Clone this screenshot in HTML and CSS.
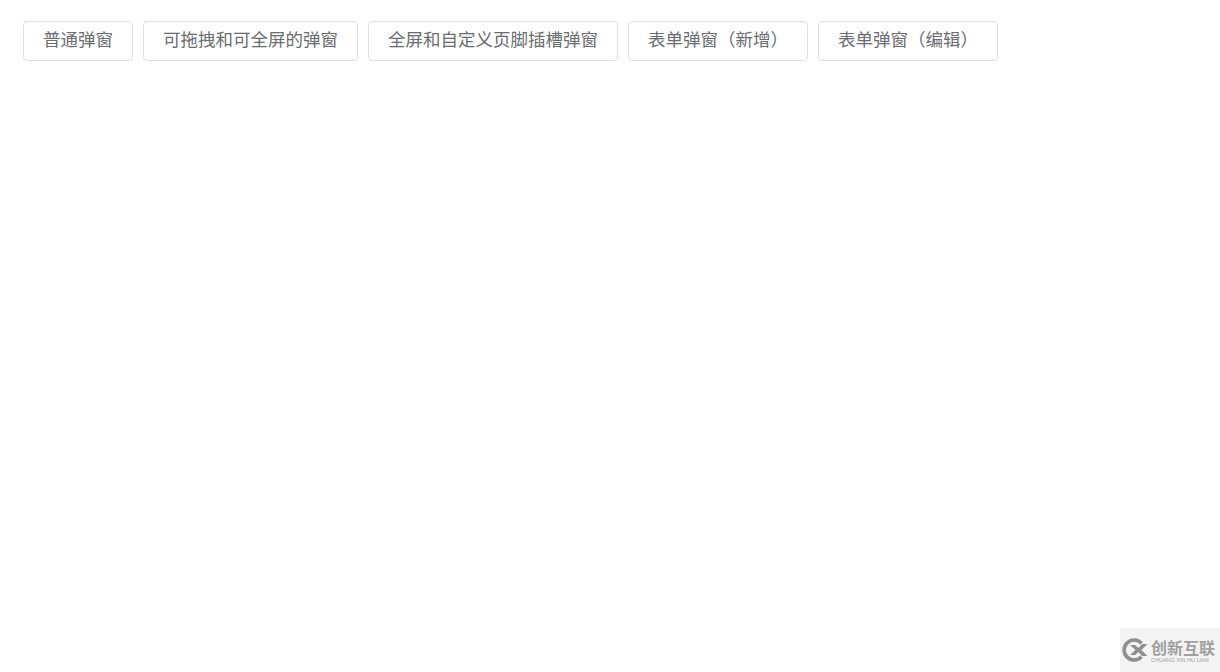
FILE: index.html
```html
<!DOCTYPE html>
<html lang="zh-CN">
<head>
    <meta charset="UTF-8">
    <title>弹窗</title>
    <link rel="stylesheet" href="styles.css">
</head>

<body>

    <div class="button-wrap">
        <button type="button" class="btn">普通弹窗</button>
        <button type="button" class="btn">可拖拽和可全屏的弹窗</button>
        <button type="button" class="btn">全屏和自定义页脚插槽弹窗</button>
        <button type="button" class="btn">表单弹窗（新增）</button>
        <button type="button" class="btn">表单弹窗（编辑）</button>
    </div>

    <!-- watermark in the corner -->
    <div class="watermark">
        <svg class="watermark-logo" width="26" height="26" viewBox="0 0 26 26">
            <path d="M19.5 6.2A10 10 0 1 0 19.5 19.8" fill="none" stroke="#8f8f8f" stroke-width="3.6"/>
            <path d="M8 8L13 8L16.5 11L20 7L25.5 7L19.5 13L25.5 19L20 19L16.5 15L13 18L8 18L13.5 13Z" fill="#8f8f8f"/>
        </svg>
        <div class="watermark-text">
            <span class="watermark-name">创新互联</span>
            <span class="watermark-pinyin">CHUANG XIN HU LIAN</span>
        </div>
    </div>

</body></html>
```

FILE: styles.css
```css
* {
    box-sizing: border-box;
}
html {
    background-color: #fff;
}
body {
    margin: 0;
    padding: 21px 23px;
    font-family: "Liberation Sans", "Noto Sans CJK SC", sans-serif;
}
.button-wrap {
    display: flex;
    gap: 10px;
}
.btn {
    height: 40px;
    padding: 0 19px 5px;
    border: 1px solid #dcdfe6;
    border-radius: 4px;
    background-color: #fff;
    color: #6a6c70;
    font-family: inherit;
    font-size: 17.5px;
    white-space: nowrap;
}
.watermark {
    position: fixed;
    right: 0;
    bottom: 0;
    width: 100px;
    height: 44px;
    display: flex;
    align-items: center;
    gap: 3px;
    padding-left: 2px;
    background-color: #f3f3f3;
}
.watermark-logo {
    flex: none;
}
.watermark-text {
    display: flex;
    flex-direction: column;
    padding-top: 3px;
    color: #a0a0a0;
}
.watermark-name {
    font-size: 16px;
    line-height: 16px;
    font-weight: bold;
    white-space: nowrap;
}
.watermark-pinyin {
    font-size: 5.5px;
    line-height: 6px;
    white-space: nowrap;
}
```
